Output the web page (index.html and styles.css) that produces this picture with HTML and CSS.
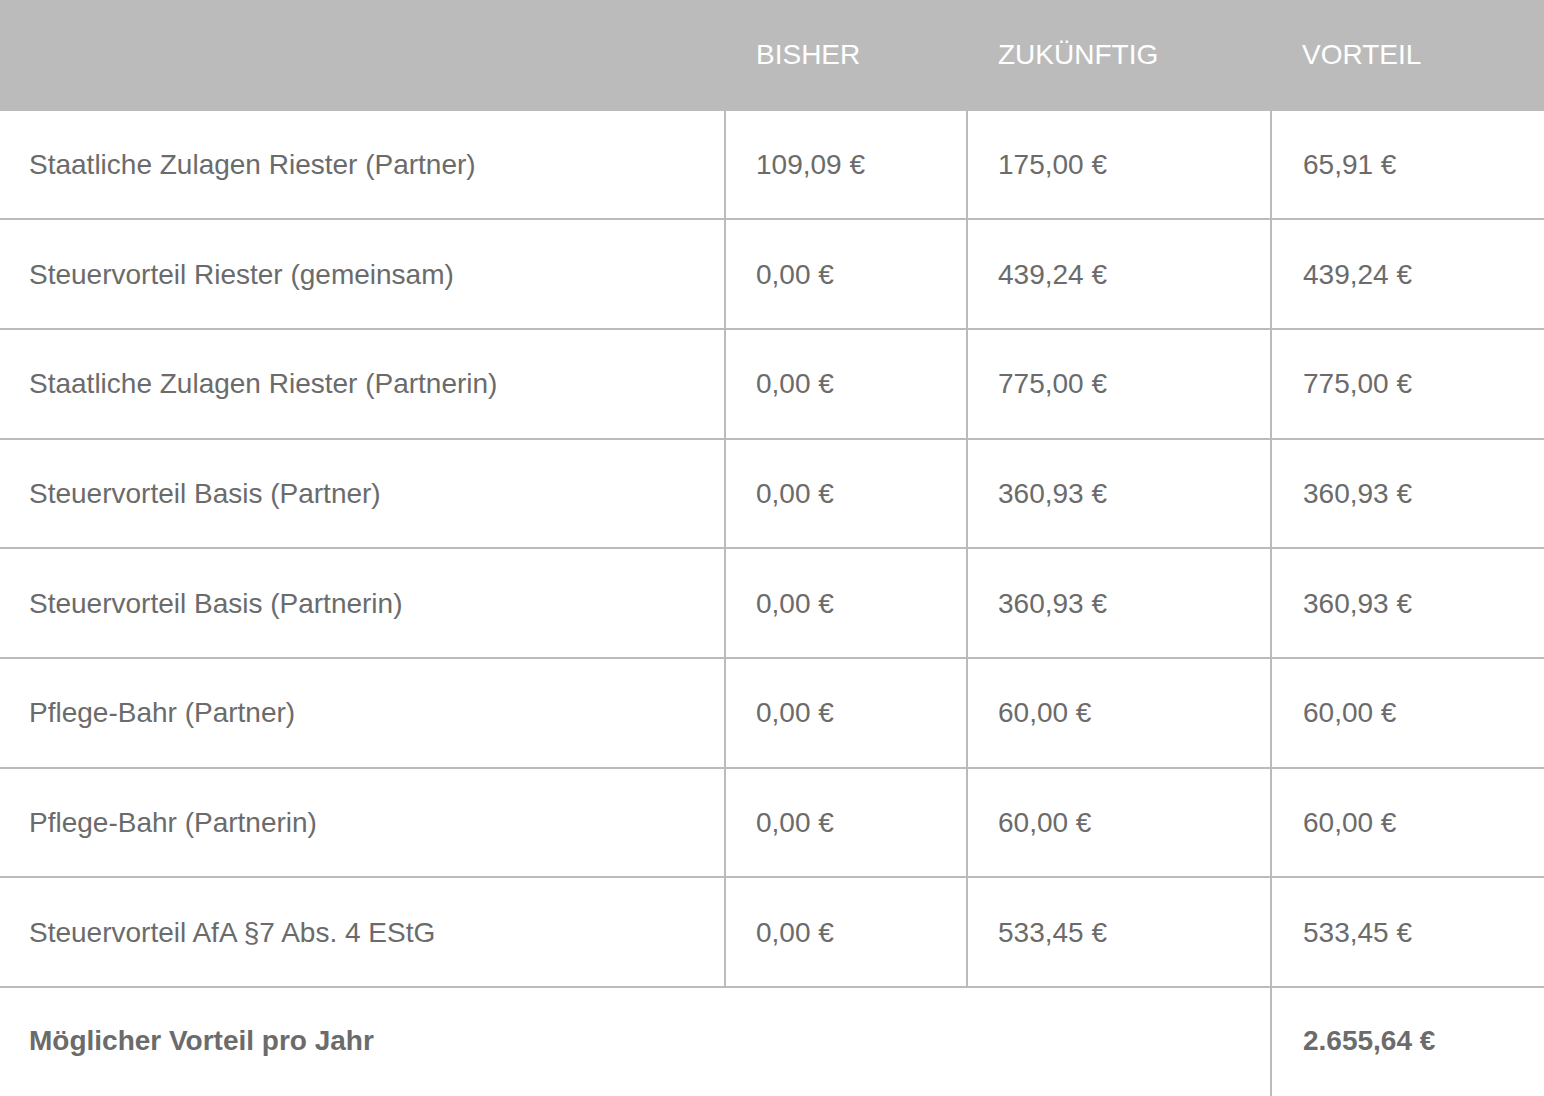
FILE: index.html
```html
<!DOCTYPE html>
<html lang="de">
<head>
<meta charset="utf-8">
<link rel="stylesheet" href="styles.css">
</head>
<body>
<div class="table">
  <div class="head"></div>
  <div class="head">BISHER</div>
  <div class="head">ZUKÜNFTIG</div>
  <div class="head">VORTEIL</div>

  <div class="cell">Staatliche Zulagen Riester (Partner)</div>
  <div class="cell">109,09 €</div>
  <div class="cell">175,00 €</div>
  <div class="cell last">65,91 €</div>

  <div class="cell">Steuervorteil Riester (gemeinsam)</div>
  <div class="cell">0,00 €</div>
  <div class="cell">439,24 €</div>
  <div class="cell last">439,24 €</div>

  <div class="cell">Staatliche Zulagen Riester (Partnerin)</div>
  <div class="cell">0,00 €</div>
  <div class="cell">775,00 €</div>
  <div class="cell last">775,00 €</div>

  <div class="cell">Steuervorteil Basis (Partner)</div>
  <div class="cell">0,00 €</div>
  <div class="cell">360,93 €</div>
  <div class="cell last">360,93 €</div>

  <div class="cell">Steuervorteil Basis (Partnerin)</div>
  <div class="cell">0,00 €</div>
  <div class="cell">360,93 €</div>
  <div class="cell last">360,93 €</div>

  <div class="cell">Pflege-Bahr (Partner)</div>
  <div class="cell">0,00 €</div>
  <div class="cell">60,00 €</div>
  <div class="cell last">60,00 €</div>

  <div class="cell">Pflege-Bahr (Partnerin)</div>
  <div class="cell">0,00 €</div>
  <div class="cell">60,00 €</div>
  <div class="cell last">60,00 €</div>

  <div class="cell">Steuervorteil AfA §7 Abs. 4 EStG</div>
  <div class="cell">0,00 €</div>
  <div class="cell">533,45 €</div>
  <div class="cell last">533,45 €</div>

  <div class="cell total span3">Möglicher Vorteil pro Jahr</div>
  <div class="cell total last">2.655,64 €</div>
</div>
</body>
</html>
```
FILE: styles.css
```css
html, body {
  margin: 0;
  padding: 0;
  background: #ffffff;
}
body {
  font-family: "Liberation Sans", Arial, sans-serif;
  color: #6b6b6b;
  font-size: 28px;
}
.table {
  display: grid;
  grid-template-columns: 726px 242px 304px 1fr;
  grid-template-rows: 110.5px repeat(8, 109.7px) 110px;
  width: 1544px;
}
.head {
  background: #bbbbbb;
  color: #ffffff;
  display: flex;
  align-items: center;
  padding-left: 30px;
}
.cell {
  display: flex;
  align-items: center;
  padding-left: 30px;
  padding-top: 1px;
  border-right: 2px solid #bbbbbb;
  border-bottom: 2px solid #bbbbbb;
}
.table > .cell:nth-child(4n+1) {
  padding-left: 29px;
}
.cell.last {
  border-right: none;
  padding-left: 31px;
}
.cell.total {
  font-weight: bold;
  border-bottom: none;
  padding-top: 0;
  padding-bottom: 4px;
}
.cell.span3 {
  grid-column: 1 / span 3;
  padding-left: 29px;
}
```
